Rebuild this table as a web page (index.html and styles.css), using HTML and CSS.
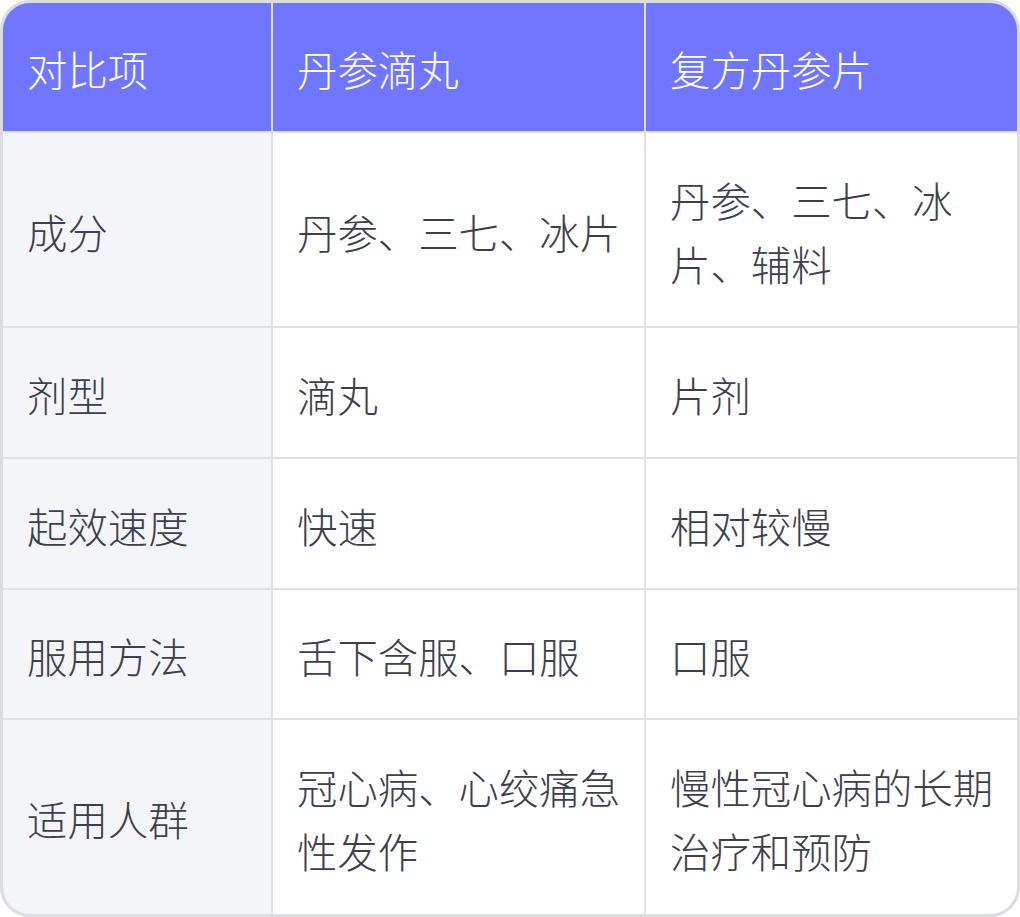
FILE: index.html
```html
<!DOCTYPE html>
<html lang="zh-CN">
<head>
<meta charset="utf-8">
<link rel="stylesheet" href="styles.css">
</head>
<body>
<div class="table">
  <div class="cell head">对比项</div>
  <div class="cell head">丹参滴丸</div>
  <div class="cell head">复方丹参片</div>

  <div class="cell label">成分</div>
  <div class="cell">丹参、三七、冰片</div>
  <div class="cell">丹参、三七、冰片、辅料</div>

  <div class="cell label">剂型</div>
  <div class="cell">滴丸</div>
  <div class="cell">片剂</div>

  <div class="cell label">起效速度</div>
  <div class="cell">快速</div>
  <div class="cell">相对较慢</div>

  <div class="cell label">服用方法</div>
  <div class="cell">舌下含服、口服</div>
  <div class="cell">口服</div>

  <div class="cell label">适用人群</div>
  <div class="cell">冠心病、心绞痛急性发作</div>
  <div class="cell">慢性冠心病的长期治疗和预防</div>
</div>
</body>
</html>
```
FILE: styles.css
```css
html, body {
  margin: 0;
  padding: 0;
  background: #ffffff;
}
body {
  font-family: "Noto Sans CJK SC", "Noto Sans", sans-serif;
}
.table {
  box-sizing: border-box;
  width: 1020px;
  height: 917px;
  border: 3px solid #dcdde2;
  border-radius: 30px;
  overflow: hidden;
  display: grid;
  grid-template-columns: 268px 371px 371px;
  grid-template-rows: 128px 193px 129px 129px 128px 194px;
  gap: 2px;
  background: #e0e1e5;
}
.cell {
  background: #ffffff;
  color: #3d404b;
  font-size: 40.4px;
  font-weight: 300;
  line-height: 64px;
  padding: 4px 12px 0 24px;
  display: flex;
  align-items: center;
}
.cell.head {
  background: #7076ff;
  color: #ffffff;
}
.cell.label {
  background: #f4f5f9;
}
```
